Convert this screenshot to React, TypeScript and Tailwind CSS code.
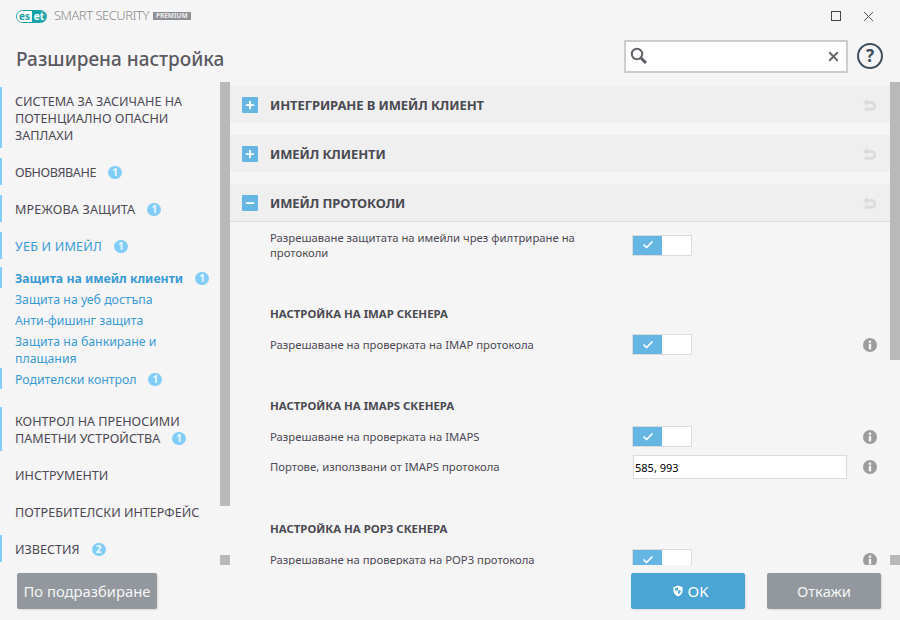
import { Check, Minus, Plus, X } from "lucide-react"

const font = "font-['Noto_Sans','Open_Sans',sans-serif]"

function Badge({ n, className = "" }: { n: number; className?: string }) {
  return (
    <span className={`inline-flex h-[13px] w-[14px] shrink-0 items-center justify-center rounded-full bg-[#82cdf8] align-[1px] text-[10px] leading-none font-bold text-[#eef8fe] ${className}`}>
      {n}
    </span>
  )
}

function NavItem({ children, bar, badge }: { children: React.ReactNode; bar?: boolean; badge?: number }) {
  return (
    <div className={`border-l-2 pt-[6px] pr-2 pb-[4px] pl-[13px] text-[12.6px] leading-[17px] text-[#4d4a55] ${bar ? "border-[#82cdf8]" : "border-transparent"}`}>
      {children}
      {badge ? <Badge n={badge} className="ml-[12px]" /> : null}
    </div>
  )
}

function SubItem({ children, bar, badge, active }: { children: React.ReactNode; bar?: boolean; badge?: number; active?: boolean }) {
  return (
    <div className={`border-l-2 pt-[3px] pr-2 pb-[1px] pl-[13px] text-[12.3px] leading-[17px] text-[#3a9bd8] ${bar ? "border-[#82cdf8]" : "border-transparent"} ${active ? "font-bold" : ""}`}>
      {children}
      {badge ? <Badge n={badge} className="ml-[12px]" /> : null}
    </div>
  )
}

function SectionHeader({ title, open, className = "" }: { title: string; open?: boolean; className?: string }) {
  return (
    <div className={`flex h-[37px] items-center bg-[#efefef] pr-[14px] pl-[12px] ${className}`}>
      <span className="flex h-4 w-4 items-center justify-center rounded-[1px] bg-[#65b6e2]">
        {open ? <Minus size={12} strokeWidth={3.5} className="text-white" /> : <Plus size={12} strokeWidth={3.5} className="text-white" />}
      </span>
      <span className="ml-[12px] pt-[2px] text-[13px] font-bold tracking-[-0.1px] text-[#4a4a52]">{title}</span>
      <svg viewBox="0 0 14 14" className="ml-auto h-[14px] w-[14px]" fill="none" stroke="#dcdcdc" strokeWidth="3">
        <path d="M4 4.500h5.500a3.300 3.300 0 0 1 0 6.800H2.500" />
        <path d="M5.500 0.500 1 4.500 5.500 8.500z" fill="#dcdcdc" stroke="none" />
      </svg>
    </div>
  )
}

function Toggle() {
  return (
    <div className="flex h-[21px] w-[60px] shrink-0 border border-[#dcdcdc] bg-white">
      <div className="flex w-[29px] items-center justify-center bg-[#65b6e2]">
        <Check size={12} strokeWidth={3.5} className="text-white" />
      </div>
    </div>
  )
}

function Info() {
  return (
    <svg viewBox="0 0 14 14" className="block h-[14px] w-[14px]">
      <circle cx="7" cy="7" r="7" fill="#9c9c9c" />
      <rect x="5.800" y="2.600" width="2.400" height="2.200" fill="#f5f5f5" />
      <rect x="5.800" y="5.800" width="2.400" height="5.600" fill="#f5f5f5" />
    </svg>
  )
}

function Row({ label, info, className = "" }: { label: string; info?: boolean; className?: string }) {
  return (
    <div className={`flex h-[21px] items-center pr-[13px] pl-[40px] ${className}`}>
      <span className="w-[362px] shrink-0 pt-[1px] text-[11.3px] text-[#4d4a55]">{label}</span>
      <Toggle />
      <span className="ml-auto">{info ? <Info /> : null}</span>
    </div>
  )
}

function Heading({ children, className = "" }: { children: React.ReactNode; className?: string }) {
  return <div className={`pl-[40px] text-[11.4px] leading-[17px] font-bold text-[#4a4a52] ${className}`}>{children}</div>
}

function ScrollBar({ thumb }: { thumb: string }) {
  return (
    <div className="flex h-[483px] w-[10px] shrink-0 flex-col justify-between">
      <div className={`${thumb} bg-[#b9b9b9]`} />
      <div className="h-[10px] bg-[#b9b9b9]" />
    </div>
  )
}

export default function App() {
  return (
    <div className={`flex h-[620px] w-[900px] flex-col overflow-hidden bg-[#f5f5f5] ${font}`}>
      {/* title bar */}
      <div className="flex h-[30px] items-center pt-[2px] pr-[23px] pl-[16px]">
        <span className="flex h-[13px] w-[31px] overflow-hidden rounded-full border border-[#17a3a8] text-[10px] leading-none font-bold">
          <span className="flex w-[15px] items-center justify-center bg-white text-[#17a3a8]">es</span>
          <span className="flex flex-1 items-center justify-center bg-[#17a3a8] text-white">et</span>
        </span>
        <span className="ml-[7px] text-[13px] font-light tracking-[-0.5px] text-[#8a8a8a]">SMART SECURITY</span>
        <span className="ml-[4px] bg-[#8d9196] px-[3px] text-[6.500px] leading-[8px] font-bold text-[#eeeeee]">PREMIUM</span>
        <span className="ml-auto h-[10px] w-[10px] border border-[#444]" />
        <X size={17} strokeWidth={1.300} className="ml-[19px] text-[#444]" />
      </div>

      {/* page title and search */}
      <div className="flex h-[52px] items-center pr-[17px] pl-[16px]">
        <h1 className="pt-[6px] text-[19px] font-medium text-[#5a5a60]">Разширена настройка</h1>
        <div className="ml-auto flex h-[33px] w-[224px] items-center border-2 border-[#cccccc] bg-white pr-[5px] pl-[4px]">
          <svg viewBox="0 0 18 18" className="h-[18px] w-[18px]" fill="none" stroke="#5f6368">
            <circle cx="7" cy="7" r="5.200" strokeWidth="2" />
            <path d="M11 11l5 5" strokeWidth="3" />
          </svg>
          <X size={15} strokeWidth={3} className="ml-auto text-[#666]" />
        </div>
        <span className="ml-[9px] flex h-[26px] w-[26px] items-center justify-center rounded-full border-2 border-[#3e4f5e] text-[17px] font-bold text-[#3e4f5e]">?</span>
      </div>

      <div className="flex min-h-0 flex-1">
        {/* sidebar */}
        <div className="flex h-[483px] w-[220px] shrink-0 flex-col gap-[10px] overflow-hidden pt-[5px]">
          <NavItem bar>СИСТЕМА ЗА ЗАСИЧАНЕ НА ПОТЕНЦИАЛНО ОПАСНИ ЗАПЛАХИ</NavItem>
          <NavItem bar badge={1}><span className="tracking-[-0.4px]">ОБНОВЯВАНЕ</span></NavItem>
          <NavItem bar badge={1}><span className="tracking-[0.15px]">МРЕЖОВА ЗАЩИТА</span></NavItem>
          <div>
            <div className="border-l-2 border-[#82cdf8] pt-[6px] pb-[4px] pl-[13px] text-[12.6px] leading-[17px] tracking-[0.2px] text-[#3a9bd8]">
              УЕБ И ИМЕЙЛ
              <Badge n={1} className="ml-[12px]" />
            </div>
            <div className="mt-[8px]">
              <SubItem bar active badge={1}>Защита на имейл клиенти</SubItem>
              <SubItem>Защита на уеб достъпа</SubItem>
              <SubItem>Анти-фишинг защита</SubItem>
              <SubItem>Защита на банкиране и плащания</SubItem>
              <SubItem bar badge={1}>Родителски контрол</SubItem>
            </div>
          </div>
          <div className="mt-[8px]">
            <NavItem bar badge={1}>КОНТРОЛ НА ПРЕНОСИМИ ПАМЕТНИ УСТРОЙСТВА</NavItem>
          </div>
          <NavItem>ИНСТРУМЕНТИ</NavItem>
          <NavItem>ПОТРЕБИТЕЛСКИ ИНТЕРФЕЙС</NavItem>
          <NavItem bar badge={2}>ИЗВЕСТИЯ</NavItem>
        </div>
        <ScrollBar thumb="h-[424px]" />

        {/* main panel */}
        <div className="h-[483px] w-[660px] shrink-0 overflow-hidden pt-[4px]">
          <SectionHeader title="ИНТЕГРИРАНЕ В ИМЕЙЛ КЛИЕНТ" />
          <SectionHeader title="ИМЕЙЛ КЛИЕНТИ" className="mt-[12px]" />
          <SectionHeader title="ИМЕЙЛ ПРОТОКОЛИ" open className="mt-[12px] h-[38px] border-b border-[#dcdcdc]" />
          <div className="mt-[8px] flex h-[30px] items-center pl-[40px]">
            <span className="w-[362px] shrink-0 pr-[40px] text-[11.3px] leading-[15px] text-[#4d4a55]">
              Разрешаване защитата на имейли чрез филтриране на протоколи
            </span>
            <Toggle />
          </div>
          <Heading className="mt-[45px]">НАСТРОЙКА НА IMAP СКЕНЕРА</Heading>
          <Row label="Разрешаване на проверката на IMAP протокола" info className="mt-[12px]" />
          <Heading className="mt-[42px]">НАСТРОЙКА НА IMAPS СКЕНЕРА</Heading>
          <Row label="Разрешаване на проверката на IMAPS" info className="mt-[12px]" />
          <div className="mt-[8px] flex h-[24px] items-center pr-[13px] pl-[40px]">
            <span className="w-[363px] shrink-0 text-[11.3px] text-[#4d4a55]">Портове, използвани от IMAPS протокола</span>
            <input
              readOnly
              value="585, 993"
              className="h-[24px] w-[214px] border border-[#dcdcdc] bg-white px-[1px] text-[11px] text-black outline-none"
            />
            <span className="ml-auto"><Info /></span>
          </div>
          <Heading className="mt-[41px]">НАСТРОЙКА НА POP3 СКЕНЕРА</Heading>
          <Row label="Разрешаване на проверката на POP3 протокола" info className="mt-[12px]" />
        </div>
        <ScrollBar thumb="h-[278px]" />
      </div>

      {/* footer */}
      <div className="flex h-[55px] items-start pt-[8px] pr-[19px] pl-[17px]">
        <button className="h-[36px] w-[140px] rounded-[2px] bg-[#92989e] text-[14.800px] text-[#f5f5f5] shadow-[1px_1px_2px_rgba(0,0,0,0.1)]">По подразбиране</button>
        <button className="ml-auto flex h-[36px] w-[114px] items-center justify-center gap-[4px] rounded-[2px] bg-[#4ba5d4] pl-[6px] text-[15px] text-white shadow-[1px_1px_2px_rgba(0,0,0,0.1)]">
          <svg viewBox="0 0 12 14" className="h-[12px] w-[10px]">
            <path d="M6 0.500 11.500 2.500V7c0 3.200-2.600 5.400-5.500 6.500C3.100 12.400.5 10.200.5 7V2.500z" fill="#fff" />
            <path d="M6 2.500v4H2.500V3.800zM6 6.500h3.500c0 2-1.500 3.500-3.500 4.500z" fill="#4ba5d4" />
          </svg>
          OK
        </button>
        <button className="ml-[22px] h-[36px] w-[114px] rounded-[2px] bg-[#92989e] text-[14.800px] text-[#f5f5f5] shadow-[1px_1px_2px_rgba(0,0,0,0.1)]">Откажи</button>
      </div>
    </div>
  )
}
